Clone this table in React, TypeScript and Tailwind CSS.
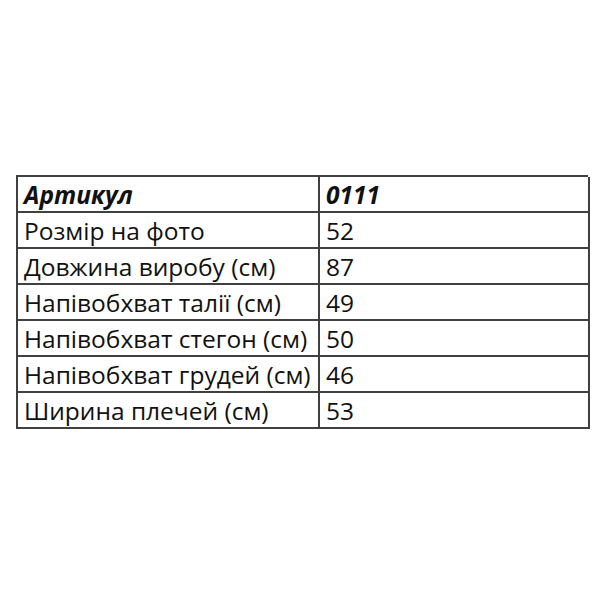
import React from "react";

const rows: [string, string, boolean][] = [
  ["Артикул", "0111", true],
  ["Розмір на фото", "52", false],
  ["Довжина виробу (см)", "87", false],
  ["Напівобхват талії (см)", "49", false],
  ["Напівобхват стегон (см)", "50", false],
  ["Напівобхват грудей (см)", "46", false],
  ["Ширина плечей (см)", "53", false],
];

export default function App() {
  return (
    <div className="w-[600px] h-[600px] bg-white pt-[175px] pl-[16px]" style={{ fontFamily: '"Open Sans", sans-serif' }}>
      <div className="w-[572px] border-t-2 border-l-2 border-[#404040]">
        {rows.map(([k, v, b], i) => (
          <div key={i} className="grid grid-cols-[302px_270px] h-[36px]">
            <div className={`border-r-2 border-b-2 border-[#404040] pl-[6px] flex items-center text-[24.5px] leading-none text-[#111] pt-[3px] ${b ? "font-bold italic" : ""}`}>{k}</div>
            <div className={`border-r-2 border-b-2 border-[#404040] pl-[6px] flex items-center text-[24.5px] leading-none text-[#111] pt-[3px] ${b ? "font-bold italic" : ""}`}>{v}</div>
          </div>
        ))}
      </div>
    </div>
  );
}
